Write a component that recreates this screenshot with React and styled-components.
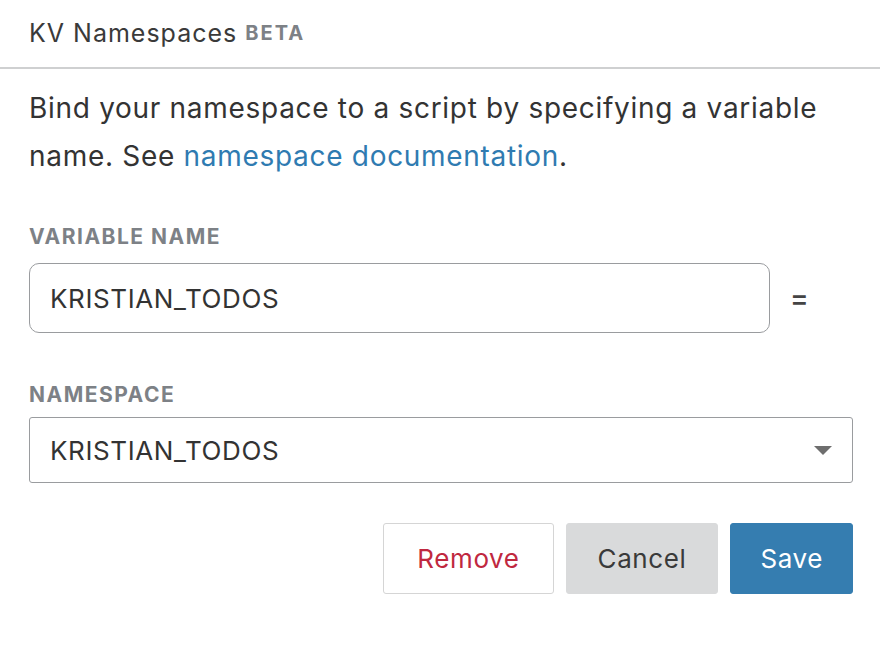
import React from "react"
import styled, { createGlobalStyle } from "styled-components"

const GlobalStyle = createGlobalStyle`
  body {
    margin: 0;
    background: #fff;
    font-family: Inter, "Liberation Sans", Arial, sans-serif;
    color: #333;
  }
`

function App() {
  return (
    <>
      <GlobalStyle />
      <Panel>
        <Header>
          <Title>KV Namespaces</Title>
          <Badge>BETA</Badge>
        </Header>
        <Body>
          <Intro>
            Bind your namespace to a script by specifying a variable name. See{" "}
            <Link href="#">namespace documentation</Link>.
          </Intro>

          <Label space={45} gap={14}>Variable name</Label>
          <InputRow>
            <TextInput defaultValue="KRISTIAN_TODOS" />
            <Equals>=</Equals>
          </InputRow>

          <Label space={50} gap={10}>Namespace</Label>
          <Select>
            <span>KRISTIAN_TODOS</span>
            <Caret />
          </Select>

          <Actions>
            <Button variant="remove">Remove</Button>
            <Button variant="cancel">Cancel</Button>
            <Button variant="save">Save</Button>
          </Actions>
        </Body>
      </Panel>
    </>
  )
}

const Panel = styled.div`
  width: 880px;
  height: 645px;
  background: #fff;
`

const Header = styled.header`
  height: 69px;
  display: flex;
  align-items: center;
  gap: 8px;
  padding: 0 29px 2px;
  box-sizing: border-box;
  border-bottom: 2px solid #cfd0d1;
`

const Title = styled.h2`
  margin: 0;
  font-size: 25px;
  font-weight: 400;
  letter-spacing: 1px;
  color: #3a3a3a;
`

const Badge = styled.span`
  font-size: 20px;
  font-weight: 700;
  letter-spacing: 2px;
  color: #7d8186;
`

const Body = styled.div`
  padding: 15px 27px 0 29px;
`

const Intro = styled.p`
  margin: 0;
  font-size: 28px;
  letter-spacing: 0.7px;
  line-height: 48px;
  color: #333;
`

const Link = styled.a`
  color: #2f7bb1;
  text-decoration: none;
`

const Label = styled.div`
  margin-top: ${(p) => p.space}px;
  margin-bottom: ${(p) => p.gap}px;
  font-size: 21px;
  line-height: 24px;
  font-weight: 700;
  letter-spacing: 1.5px;
  text-transform: uppercase;
  color: #7d8186;
`

const InputRow = styled.div`
  display: grid;
  grid-template-columns: 1fr 83px;
  align-items: center;
`

const TextInput = styled.input`
  height: 70px;
  box-sizing: border-box;
  border: 1.5px solid #9a9c9f;
  border-radius: 10px;
  padding: 0 20px;
  font-family: inherit;
  font-size: 26px;
  letter-spacing: 0.6px;
  color: #333;
  outline: none;
`

const Equals = styled.span`
  justify-self: start;
  padding-left: 20px;
  font-size: 28px;
  font-weight: 500;
  color: #444;
`

const Select = styled.div`
  height: 66px;
  box-sizing: border-box;
  display: flex;
  align-items: center;
  justify-content: space-between;
  padding: 0 20px;
  border: 1.5px solid #9a9c9f;
  border-radius: 3px;
  font-size: 26px;
  letter-spacing: 0.6px;
  color: #333;
  margin-bottom: 40px;
`

const Caret = styled.span`
  width: 0;
  height: 0;
  border-left: 9px solid transparent;
  border-right: 9px solid transparent;
  border-top: 9px solid #6e6e6e;
`

const Actions = styled.div`
  display: flex;
  justify-content: flex-end;
  gap: 12px;
`

const palette = {
  remove: { bg: "#fff", fg: "#c0283f", border: "#d5d5d5", pad: 33 },
  cancel: { bg: "#d9dadb", fg: "#3a3a3a", border: "#d9dadb", pad: 31 },
  save: { bg: "#357db0", fg: "#fff", border: "#357db0", pad: 29 },
}

const Button = styled.button`
  height: 71px;
  padding: 0 ${(p) => palette[p.variant].pad}px;
  box-sizing: border-box;
  border-radius: 3px;
  font-family: inherit;
  font-size: 26px;
  letter-spacing: 0.6px;
  background: ${(p) => palette[p.variant].bg};
  color: ${(p) => palette[p.variant].fg};
  border: 1.5px solid ${(p) => palette[p.variant].border};
`

export default App
